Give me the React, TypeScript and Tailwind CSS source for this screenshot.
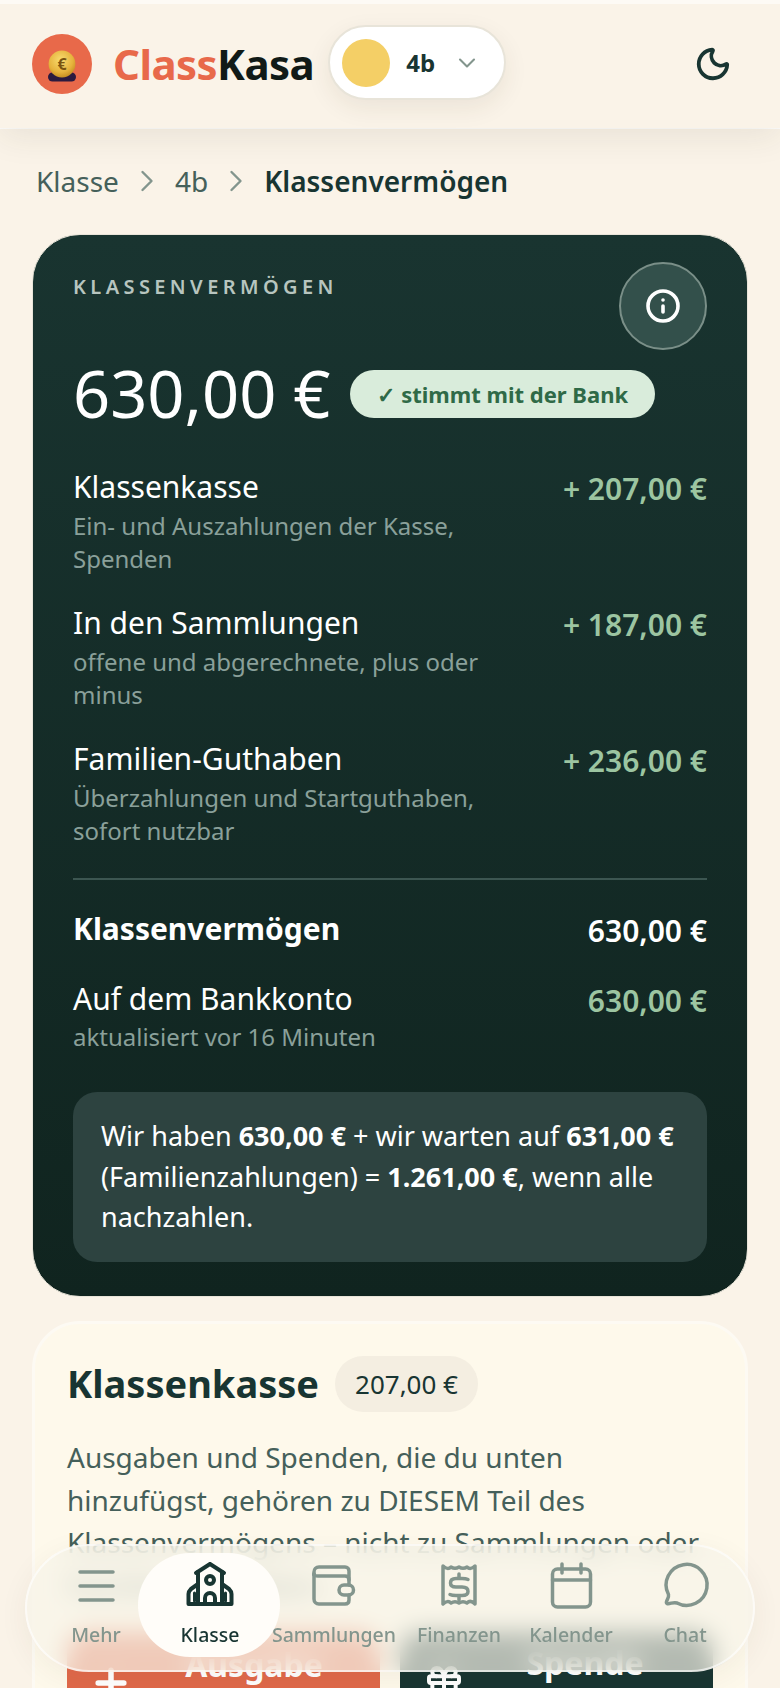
import { ChevronDown, ChevronRight, Moon, Info, Plus, Gift } from "lucide-react";

function Logo() {
  return (
    <svg width="60" height="60" viewBox="0 0 60 60" className="shrink-0">
      <defs>
        <radialGradient id="coin" cx="45%" cy="35%" r="65%">
          <stop offset="0%" stopColor="#f8dc70" />
          <stop offset="70%" stopColor="#e6b23c" />
          <stop offset="100%" stopColor="#c88f22" />
        </radialGradient>
      </defs>
      <circle cx="30" cy="30" r="30" fill="#e8694a" />
      <rect x="16" y="38.5" width="28" height="9" rx="4.5" fill="#2b1a3f" />
      <circle cx="30" cy="30" r="13.4" fill="url(#coin)" />
      <text x="30" y="36" textAnchor="middle" fontSize="16" fontWeight="700" fill="#7a5410" fontFamily="'Noto Sans', sans-serif">€</text>
    </svg>
  );
}

function Ico({ children, color = "#83958d", sw = "3.5" }: { children: React.ReactNode; color?: string; sw?: string }) {
  return (
    <svg width="60" height="60" viewBox="0 0 60 60" className="shrink-0" fill="none" stroke={color} strokeWidth={sw} strokeLinejoin="round" strokeLinecap="round">
      {children}
    </svg>
  );
}

const icons = {
  menu: (
    <Ico>
      <path d="M14 17 H47 M14 31 H47 M14 45 H47" />
    </Ico>
  ),
  school: (
    <Ico color="#183532" sw="4">
      <path d="M30 9 L44 18 M30 9 L16 18" />
      <path d="M18 17 V49 M42 17 V49" />
      <circle cx="30" cy="25" r="4" />
      <path d="M18 29 L11 34 C9 36 8.5 37 8.5 39 V49 H51.5 V39 C51.5 37 51 36 49 34 L42 29" />
      <path d="M25 49 V43 A5 5 0 0 1 35 43 V49" />
      <path d="M14.5 38 V46 M45.5 38 V46" strokeWidth="3" />
    </Ico>
  ),
  wallet: (
    <Ico>
      <path d="M10 20 V17 C10 14 12 12 15 12 H41 C43.5 12 45 14 45 16 V30" />
      <path d="M10 19 C10 21 12 21 14 21 H41 C43.5 21 45 22.5 45 25" />
      <path d="M10 19 V44 C10 47 12 49 15 49 H41 C43.5 49 45 47.5 45 45 V40" />
      <rect x="35" y="30" width="14.5" height="10" rx="5" />
    </Ico>
  ),
  receipt: (
    <Ico>
      <path d="M14 11 C17 14 20 14 22 12 C25 14 27 14 30 12 C33 14 35 14 38 12 C40 14 43 14 46 11 V49 C43 46 40 46 38 48 C35 46 33 46 30 48 C27 46 25 46 22 48 C20 46 17 46 14 49 Z" />
      <path d="M39 24.5 C37 23.5 35 23.5 33 23.5 H27 C23 23.5 21.5 25.5 21.5 28 C21.5 30.5 23 32 27 32 H33 C37 32 39 34 39 36.5 C39 39 37 40.5 33 40.5 H27 C25 40.5 23 40.5 21 39.5" />
      <path d="M30 19 V23 M30 41 V45" />
    </Ico>
  ),
  calendar: (
    <Ico>
      <rect x="11.5" y="14" width="38" height="38" rx="5" />
      <path d="M11.5 25 H49.5 M21 9 V18 M40 9 V18" />
    </Ico>
  ),
  chat: (
    <Ico>
      <path d="M13.5 39.5 A20.5 20.5 0 1 1 22 48 C18 46.5 15 49.5 12 48.5 C9.5 47 14.5 43.5 13.5 39.5 Z" />
    </Ico>
  ),
};

function NavItem({ label, icon, w, active }: { label: string; icon: React.ReactNode; w: string; active?: boolean }) {
  return (
    <div className={`relative flex flex-col items-center ${w}`}>
      <div className="flex h-[50px] items-center justify-center">{icon}</div>
      <span className={`mt-[11px] whitespace-nowrap text-[19.5px] font-medium leading-[28px] ${active ? "text-[#183532]" : "text-[#83958d]"}`}>{label}</span>
    </div>
  );
}

function Row({ title, sub, value }: { title: string; sub: string[]; value: string }) {
  return (
    <div className="flex items-start justify-between">
      <div>
        <div className="text-[30px] leading-[40px] text-white">{title}</div>
        <div className="mt-[2px] text-[24px] leading-[33px] text-[#8aa09a]">
          {sub.map((s) => (
            <div key={s}>{s}</div>
          ))}
        </div>
      </div>
      <div className="mt-[2px] text-[30px] font-semibold leading-[40px] text-[#9cc5a1]">{value}</div>
    </div>
  );
}

export default function App() {
  return (
    <div className="relative h-[1688px] overflow-hidden bg-[#faf3e8] font-['Noto_Sans',sans-serif] text-[#183532]">
      <header className="flex h-[128px] items-center justify-between border-t-[4px] border-t-[#fdfaf5] pb-[4px] pl-[32px] pr-[48px] shadow-[0_8px_32px_rgba(60,50,30,0.09),0_1px_0_rgba(255,255,255,0.8)]">
        <div className="flex items-center">
          <Logo />
          <div className="ml-[21px] text-[42px] font-bold leading-none tracking-[-0.55px]">
            <span className="text-[#e8694a]">Class</span>
            <span className="text-[#111a17]">Kasa</span>
          </div>
          <div className="mb-[3px] ml-[14px] flex h-[75px] w-[178px] items-center rounded-full border-2 border-[#e8e4d9] bg-white pl-[12px] shadow-[0_8px_24px_rgba(60,50,30,0.08)]">
            <div className="h-[48px] w-[48px] rounded-full bg-[#f4cf66]" />
            <span className="ml-[16px] text-[24px] font-bold">4b</span>
            <ChevronDown className="ml-[18px] text-[#83958d]" size={28} strokeWidth={1.8} />
          </div>
        </div>
        <Moon size={38} strokeWidth={2.4} className="text-[#183532]" />
      </header>

      <main className="px-[32px]">
        <nav className="flex h-[106px] items-center pl-[4px] text-[28px]">
          <span className="text-[#45605a]">Klasse</span>
          <ChevronRight size={36} strokeWidth={1.6} className="mx-[10px] text-[#83958d]" />
          <span className="text-[#45605a]">4b</span>
          <ChevronRight size={36} strokeWidth={1.6} className="mx-[10px] text-[#83958d]" />
          <span className="font-semibold">Klassenvermögen</span>
        </nav>

        <section className="h-[1063px] rounded-[48px] border border-[#e8e4d9] bg-gradient-to-b from-[#193430] to-[#10241f] px-[40px] pt-[27px]">
          <div className="flex items-start justify-between">
            <div className="mt-[11px] text-[20px] font-semibold leading-[28px] tracking-[4.4px] text-[#b7c5bf]">KLASSENVERMÖGEN</div>
            <div className="flex h-[88px] w-[88px] items-center justify-center rounded-full border-2 border-[#7a8f88] bg-[#33504b]">
              <Info size={36} strokeWidth={2.4} className="text-white" />
            </div>
          </div>
          <div className="-mt-[1px] flex items-center">
            <div className="text-[65px] leading-[88px] text-white">630,00 €</div>
            <div className="ml-[20px] mt-[2px] flex h-[48px] items-center whitespace-nowrap rounded-full bg-[#d9ecdb] px-[27px] text-[22px] font-bold text-[#2f6a47]">✓ stimmt mit der Bank</div>
          </div>
          <div className="mt-[30px] flex flex-col gap-[28px]">
            <Row title="Klassenkasse" sub={["Ein- und Auszahlungen der Kasse,", "Spenden"]} value="+ 207,00 €" />
            <Row title="In den Sammlungen" sub={["offene und abgerechnete, plus oder", "minus"]} value="+ 187,00 €" />
            <Row title="Familien-Guthaben" sub={["Überzahlungen und Startguthaben,", "sofort nutzbar"]} value="+ 236,00 €" />
          </div>
          <div className="mt-[31px] border-t-2 border-[#3c5651] pt-[29px]">
            <div className="flex items-start justify-between text-[30px] font-bold leading-[40px] text-white">
              <span>Klassenvermögen</span>
              <span className="mt-[2px] font-semibold">630,00 €</span>
            </div>
            <div className="mt-[28px] flex items-start justify-between">
              <div>
                <div className="text-[30px] leading-[40px] text-white">Auf dem Bankkonto</div>
                <div className="mt-[2px] text-[24px] leading-[32px] text-[#8aa09a]">aktualisiert vor 16 Minuten</div>
              </div>
              <div className="mt-[2px] text-[30px] font-semibold leading-[40px] text-[#9cc5a1]">630,00 €</div>
            </div>
          </div>
          <div className="mt-[39px] rounded-[24px] bg-[#2d4340] px-[28px] py-[24px] text-[27px] leading-[40.5px] text-white">
            Wir haben <b>630,00 €</b> + wir warten auf <b>631,00 €</b> (Familienzahlungen) = <b>1.261,00 €</b>, wenn alle nachzahlen.
          </div>
        </section>

        <section className="mt-[24px] h-[500px] rounded-[48px] border-[3px] border-[#fdfaf3] bg-[#fef9eb] px-[32px] pt-[32px]">
          <div className="flex items-center">
            <h2 className="-mt-[3px] text-[38px] font-bold leading-[48px]">Klassenkasse</h2>
            <div className="ml-[16px] flex h-[56px] items-center rounded-full bg-[#f4eee1] px-[20px] text-[26px]">207,00 €</div>
          </div>
          <p className="mt-[24px] text-[28px] leading-[42.5px] text-[#45605a]">
            Ausgaben und Spenden, die du unten hinzufügst, gehören zu DIESEM Teil des Klassenvermögens – nicht zu Sammlungen oder Familien-Guthaben.
          </p>
          <div className="mt-[26px] grid grid-cols-2 gap-[20px]">
            <div className="flex h-[130px] items-start gap-[16px] rounded-[20px] bg-[#e0694a] pl-[22px] pt-[12px] text-white">
              <Plus size={44} strokeWidth={3} className="mt-[17px] shrink-0" />
              <span className="w-[210px] text-center text-[32px] font-bold leading-[42px]">Ausgabe<br />hinzufügen</span>
            </div>
            <div className="flex h-[130px] items-start gap-[16px] rounded-[20px] bg-[#183532] pl-[24px] pt-[10px] text-white">
              <Gift size={40} strokeWidth={2.4} className="mt-[21px] shrink-0" />
              <span className="w-[210px] text-center text-[32px] font-bold leading-[42px]">Spende<br />hinzufügen</span>
            </div>
          </div>
        </section>
      </main>

      <div className="fixed left-[25px] top-[1544px] flex h-[128px] w-[730px] items-center rounded-[64px] border-2 border-[#ffffff99] bg-[#f7f3e8b3] pb-[8px] pl-[44px] shadow-[0_8px_30px_rgba(60,50,30,0.06)] backdrop-blur-[12px]">
        <div className="absolute left-[111px] top-[7px] h-[104px] w-[142px] rounded-[52px] bg-[#fffdf9]" />
        <NavItem label="Mehr" w="w-[50px]" icon={icons.menu} />
        <NavItem label="Klasse" w="ml-[39px] w-[100px]" active icon={icons.school} />
        <NavItem label="Sammlungen" w="ml-[12px] w-[124px]" icon={icons.wallet} />
        <NavItem label="Finanzen" w="ml-[19px] w-[88px]" icon={icons.receipt} />
        <NavItem label="Kalender" w="ml-[24px] w-[88px]" icon={icons.calendar} />
        <NavItem label="Chat" w="ml-[47px] w-[46px]" icon={icons.chat} />
      </div>
    </div>
  );
}
